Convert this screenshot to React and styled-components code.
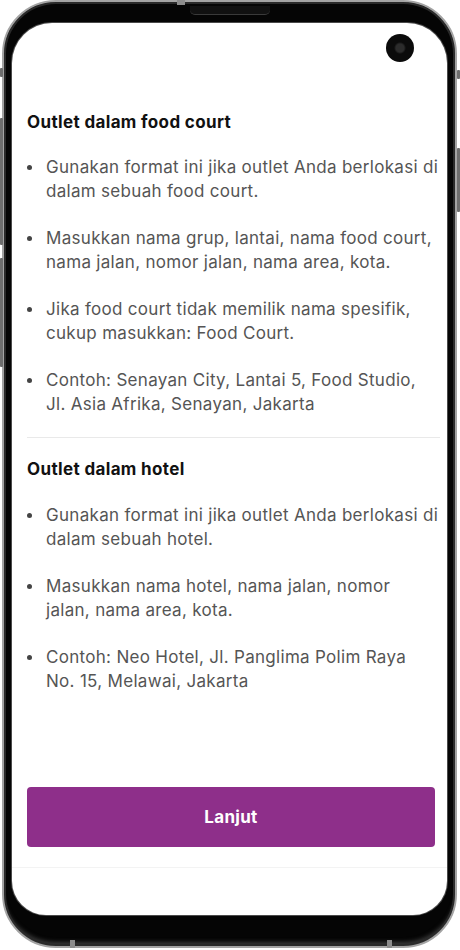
import React from "react";
import styled, { createGlobalStyle } from "styled-components";

const Global = createGlobalStyle`
  html, body { margin: 0; padding: 0; background: #ffffff; }
  body { width: 460px; height: 950px; overflow: hidden; font-family: Inter, "Noto Sans", sans-serif; }
  * { box-sizing: border-box; }
`;

const Phone = styled.div`
  position: relative;
  margin-left: 2px;
  width: 455px;
  height: 948px;
  border-radius: 54px;
  border: 2px solid #a4a4a4;
  background: #050505;
  padding: 21px 8px 31px 8px;
  box-shadow: inset 0 0 0 2px #2a2a2a, inset 0 -6px 4px -2px #3a3a3a;
  display: flex;
`;

const SideKey = styled.span`
  position: absolute;
  ${(p) => (p.$side === "left" ? "left: -4px;" : "right: -5px;")}
  top: ${(p) => p.$top}px;
  width: 3px;
  height: ${(p) => p.$h}px;
  background: #6e6e6e;
  border-radius: 1px;
`;

const EdgeNub = styled.span`
  position: absolute;
  left: ${(p) => p.$left}px;
  top: ${(p) => p.$top}px;
  width: ${(p) => p.$w}px;
  height: ${(p) => p.$h}px;
  background: #8c8c8c;
`;

const Speaker = styled.span`
  position: absolute;
  left: 186px;
  top: 4px;
  width: 80px;
  height: 9px;
  border-radius: 0 0 5px 5px;
  background: #111;
  border-bottom: 1px solid #3a3a3a;
`;

const Screen = styled.div`
  position: relative;
  flex: 1;
  background: #ffffff;
  border-radius: 40px 40px 34px 34px;
  box-shadow: 0 0 0 1px #4a4a4a;
  display: flex;
  flex-direction: column;
  padding: 87px 12px 0 15px;
  overflow: hidden;
`;

const Camera = styled.span`
  position: absolute;
  top: 11px;
  right: 33px;
  width: 28px;
  height: 28px;
  border-radius: 50%;
  background: radial-gradient(circle at 50% 50%, #2c2c2c 0 4px, #0b0b0b 6px);
`;

const Section = styled.section`
  display: flex;
  flex-direction: column;
`;

const Heading = styled.h2`
  margin: 0;
  font-size: 17px;
  line-height: 24px;
  font-weight: 700;
  color: #111111;
  letter-spacing: 0.35px;
`;

const List = styled.ul`
  list-style: none;
  margin: ${(p) => p.$top}px 0 0 0;
  padding: 0;
  display: flex;
  flex-direction: column;
  gap: 23px;
`;

const Item = styled.li`
  position: relative;
  padding-left: 19px;
  font-size: 17px;
  line-height: 24px;
  letter-spacing: 0.3px;
  color: #555555;
  white-space: nowrap;

  &::before {
    content: "";
    position: absolute;
    left: 0;
    top: 10px;
    width: 5px;
    height: 5px;
    border-radius: 50%;
    background: #444444;
  }
`;

const Line = styled.span`
  display: block;
`;

const Divider = styled.hr`
  margin: 21px -5px 19px 0;
  border: none;
  height: 1px;
  background: #e9e9e9;
`;

const Footer = styled.div`
  margin-top: auto;
  padding-bottom: 47px;
  display: flex;
  flex-direction: column;
`;

const Button = styled.button`
  height: 60px;
  border: none;
  border-radius: 4px;
  background: #8e2f8a;
  color: #ffffff;
  font-family: Inter, "Noto Sans", sans-serif;
  font-size: 17px;
  letter-spacing: 0.3px;
  font-weight: 700;
  cursor: pointer;
`;

const BottomLine = styled.div`
  height: 1px;
  margin: 20px -12px 0 -15px;
  background: #f3f3f3;
`;

const foodCourt = [
  ["Gunakan format ini jika outlet Anda berlokasi di", "dalam sebuah food court."],
  ["Masukkan nama grup, lantai, nama food court,", "nama jalan, nomor jalan, nama area, kota."],
  ["Jika food court tidak memilik nama spesifik,", "cukup masukkan: Food Court."],
  ["Contoh: Senayan City, Lantai 5, Food Studio,", "Jl. Asia Afrika, Senayan, Jakarta"],
];

const hotel = [
  ["Gunakan format ini jika outlet Anda berlokasi di", "dalam sebuah hotel."],
  ["Masukkan nama hotel, nama jalan, nomor", "jalan, nama area, kota."],
  ["Contoh: Neo Hotel, Jl. Panglima Polim Raya", "No. 15, Melawai, Jakarta"],
];

function Bullets({ items, top }) {
  return (
    <List $top={top}>
      {items.map((lines) => (
        <Item key={lines[0]}>
          {lines.map((l) => (
            <Line key={l}>{l}</Line>
          ))}
        </Item>
      ))}
    </List>
  );
}

export default function App() {
  return (
    <>
      <Global />
      <Phone>
        <EdgeNub $left={173} $top={-2} $w={8} $h={5} />
        <Speaker />
        <SideKey $side="left" $top={66} $h={9} />
        <SideKey $side="left" $top={116} $h={127} />
        <SideKey $side="left" $top={256} $h={109} />
        <SideKey $side="right" $top={68} $h={9} />
        <SideKey $side="right" $top={146} $h={64} />
        <EdgeNub $left={66} $top={938} $w={5} $h={8} />
        <EdgeNub $left={383} $top={938} $w={5} $h={8} />
        <Screen>
          <Camera />
          <Section>
            <Heading>Outlet dalam food court</Heading>
            <Bullets items={foodCourt} top={21} />
          </Section>
          <Divider />
          <Section>
            <Heading>Outlet dalam hotel</Heading>
            <Bullets items={hotel} top={22} />
          </Section>
          <Footer>
            <Button>Lanjut</Button>
            <BottomLine />
          </Footer>
        </Screen>
      </Phone>
    </>
  );
}
